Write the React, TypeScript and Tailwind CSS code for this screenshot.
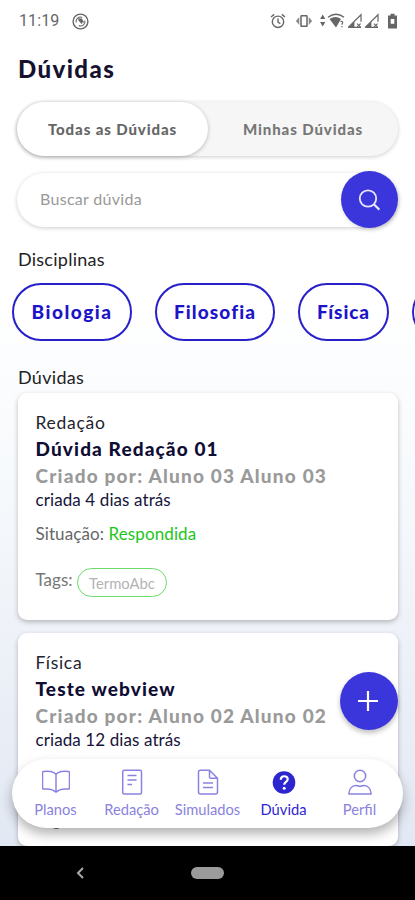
import React from "react";

interface Doubt {
  id: number;
  subject: string;
  title: string;
  author: string;
  created: string;
  status: string;
  tags: string[];
}

const doubts: Doubt[] = [
  {
    id: 1,
    subject: "Redação",
    title: "Dúvida Redação 01",
    author: "Aluno 03 Aluno 03",
    created: "criada 4 dias atrás",
    status: "Respondida",
    tags: ["TermoAbc"],
  },
  {
    id: 2,
    subject: "Física",
    title: "Teste webview",
    author: "Aluno 02 Aluno 02",
    created: "criada 12 dias atrás",
    status: "Respondida",
    tags: [],
  },
];

const StatusBar = () => (
  <header className="flex h-[42px] shrink-0 items-center pl-[19px] pr-[17px] text-[#666]">
    <span className="font-[Roboto,sans-serif] text-[16px] tracking-[0.1px]">11:19</span>
    <svg className="ml-[13px] h-[17px] w-[17px]" viewBox="0 0 17 17" fill="none" stroke="currentColor">
      <circle cx="8.5" cy="8.5" r="7.4" strokeWidth="1.4" />
      <path d="M4.2 9.5a4.300 4.300 0 0 1 6-5M12.8 7.5a4.300 4.300 0 0 1-6 5" strokeWidth="1.1" />
      <path d="M6.300 5.500l3.600.3 2 3.800-1.900-.6-.2 2-3-3.300z" fill="currentColor" strokeWidth="0.4" />
    </svg>
    <div className="ml-auto flex items-center">
      <svg className="h-4 w-4" viewBox="0 0 16 16" fill="none" stroke="currentColor" strokeWidth="1.4">
        <circle cx="8" cy="8.8" r="5.7" />
        <path d="M8 5.5v3.6l2.300 1.600M1 4l3.200-2.600M15 4l-3.200-2.600" />
      </svg>
      <svg className="ml-[9px] h-4 w-[18px]" viewBox="0 0 18 16" fill="currentColor">
        <rect x="6" y="2.700" width="6" height="10.600" rx="0.600" fill="none" stroke="currentColor" strokeWidth="1.500" />
        <path d="M4.300 4v8L.8 8zM13.700 4v8l3.500-4z" opacity="0.75" />
      </svg>
      <svg className="ml-[7px] h-4 w-[25px]" viewBox="0 0 25 16" fill="currentColor">
        <path d="M2.700 1.500l2.600 4.500H.1zM2.700 13.500L.1 9h5.200z" />
        <path d="M8 4.200c5-3.600 11-3.600 16 0" fill="none" stroke="currentColor" strokeWidth="1.400" />
        <path d="M9.500 6c4-2.800 8-2.800 11.500 0L16 14.500z" />
        <path d="M20.500 8.500c2-.8 3 1.200 1.500 2.200v1M22 13v1.300" fill="none" stroke="currentColor" strokeWidth="1.200" />
      </svg>
      {[0, 1].map((i) => (
        <svg key={i} className="ml-[2px] h-4 w-[15px]" viewBox="0 0 15 16">
          <path d="M1.200 14.400L14 1.800v7M14 14.400H1.200z" fill="none" stroke="currentColor" strokeWidth="1.200" />
          <path d="M1.200 14.500l6.200-6v6z" fill="currentColor" />
          <path d="M10 10.600l3.600 3.600M13.600 10.600L10 14.200" stroke="currentColor" strokeWidth="1.100" />
        </svg>
      ))}
      <svg className="ml-[8px] h-4 w-[11px]" viewBox="0 0 11 16">
        <path d="M3.500.8h4v1.600H10v13H1v-13h2.500z" fill="currentColor" />
        <path d="M3.700 6h3.600v4.800H3.700z" fill="#fff" />
      </svg>
    </div>
  </header>
);

const DoubtCard = ({ doubt }: { doubt: Doubt }) => (
  <article className="h-[227px] shrink-0 rounded-[9px] bg-white pl-[18px] pt-[17px] shadow-[0_2px_5px_rgba(0,0,0,0.25)] last:h-[213px]">
    <p className="text-[17.5px] leading-[26px] tracking-[0.7px] text-[#242430]">{doubt.subject}</p>
    <h2 className="text-[19px] font-black leading-[26px] tracking-[1.12px] text-[#100d33]">
      {doubt.title}
    </h2>
    <p className="text-[19px] font-black leading-[27px] tracking-[1.2px] text-[#9a9a9a]">
      Criado por: {doubt.author}
    </p>
    <p className="text-[17px] leading-[22px] tracking-[0.1px] text-[#16143a]">{doubt.created}</p>
    <p className="mt-3 text-[17px] leading-[22px] tracking-[0.1px] text-[#666]">
      Situação: <span className="text-[#1cc51c]">{doubt.status}</span>
    </p>
    <div className="mt-[23px] flex text-[17px] leading-[24px] text-[#777]">
      <span>Tags:</span>
      {doubt.tags.map((tag) => (
        <span
          key={tag}
          className="ml-1 flex h-[29px] items-center rounded-full border-[1.5px] border-[#69dc69] px-[11.5px] text-[14.8px] text-[#b3b3b3]"
        >
          {tag}
        </span>
      ))}
    </div>
  </article>
);

const tabs = [
  {
    label: "Planos",
    icon: (
      <path d="M14 6.200C11.800 3.800 6.500 2.500 1.500 3.500q-1 .2-1 1.200V20q0 1.200 1.200 1.100c4.500-.5 9 .2 10.800 2.100q1.500 1.600 3 0c1.800-1.900 6.300-2.600 10.800-2.100q1.200.1 1.200-1.100V4.700q0-1-1-1.200C21.500 2.500 16.200 3.800 14 6.200zv17" />
    ),
  },
  {
    label: "Redação",
    icon: (
      <>
        <rect x="4.700" y="2.300" width="18.800" height="23.700" rx="1.500" />
        <path d="M9.500 7.500h9M9.500 12h9M9.500 16.500h4.500" />
      </>
    ),
  },
  {
    label: "Simulados",
    icon: (
      <>
        <path d="M15.500 2.300H6.500a2 2 0 0 0-2 2V24a2 2 0 0 0 2 2h15a2 2 0 0 0 2-2V10.300zV9q0 1.300 1.300 1.300h6.700" />
        <path d="M9 15h10M9 19.500h10" />
      </>
    ),
  },
  {
    label: "Dúvida",
    active: true,
    icon: (
      <>
        <circle cx="14" cy="14.500" r="11.300" fill="#2d25d0" stroke="none" />
        <path d="M10.800 11.700c0-4.600 6.900-4.400 6.900-.5 0 2.600-3.500 2.800-3.500 5.600" stroke="#fff" strokeWidth="2.200" />
        <circle cx="14.200" cy="20.200" r="1.500" fill="#fff" stroke="none" />
      </>
    ),
  },
  {
    label: "Perfil",
    icon: (
      <>
        <circle cx="14" cy="8" r="5.700" />
        <path d="M2.800 26c.3-5 3-8.500 7.200-8.500 2.500 0 2.500.8 4 .8s1.500-.8 4-.8c4.200 0 6.900 3.500 7.200 8.500z" />
      </>
    ),
  },
];

const App = () => {
  return (
    <div className="flex h-[900px] w-[415px] flex-col overflow-hidden font-[Lato,sans-serif]">
      <main className="relative flex h-[846px] shrink-0 flex-col overflow-hidden bg-[linear-gradient(180deg,#fff_35%,#f6f9fc_58%,#e2e8f3_100%)]">
        <StatusBar />

        <h1 className="ml-[18px] mt-[11px] text-[24px] font-black leading-8 tracking-[1.4px] text-[#15122f]">
          Dúvidas
        </h1>

        <div className="mx-[17px] mt-[17px] flex h-[54px] shrink-0 rounded-full bg-[#f6f6f6] text-[15px] font-black text-[#666] shadow-[0_1px_4px_rgba(0,0,0,0.2)]">
          <button className="w-[191px] rounded-full bg-white tracking-[0.9px] shadow-[0_1px_4px_rgba(0,0,0,0.25)]">
            Todas as Dúvidas
          </button>
          <button className="flex-1 tracking-[0.9px] text-[#777]">Minhas Dúvidas</button>
        </div>

        <div className="mx-[17px] mt-[15px] flex h-[57px] shrink-0 items-center">
          <div className="-mr-[57px] flex h-[54px] flex-1 items-center rounded-full bg-white pb-0.5 pl-[23px] text-[16px] tracking-[0.3px] text-[#999] shadow-[0_1px_4px_rgba(0,0,0,0.2)]">
            Buscar dúvida
          </div>
          <button className="relative flex h-[57px] w-[57px] items-center justify-center rounded-full bg-[#3b35dc] pr-0.5 shadow-[1px_2px_4px_rgba(0,0,0,0.15)]">
            <svg className="h-6 w-6" viewBox="0 0 24 24" fill="none" stroke="#e6e6ff" strokeWidth="1.800">
              <circle cx="11" cy="10.500" r="8.200" />
              <path d="M16.800 16.300l5.500 5.300" strokeWidth="2.200" />
            </svg>
          </button>
        </div>

        <h2 className="ml-[18px] mt-[19px] text-[18px] leading-6 tracking-[0.25px] text-[#222]">
          Disciplinas
        </h2>
        <div className="ml-3 mt-3 flex shrink-0 gap-[23px] overflow-hidden text-[19px] font-black text-[#1c14c8]">
          <button className="h-[58px] w-[120px] shrink-0 rounded-full border-2 border-[#2820c8] bg-white tracking-[1.5px]">
            Biologia
          </button>
          <button className="h-[58px] w-[120px] shrink-0 rounded-full border-2 border-[#2820c8] bg-white tracking-[1.1px]">
            Filosofia
          </button>
          <button className="h-[58px] w-[91px] shrink-0 rounded-full border-2 border-[#2820c8] bg-white tracking-[0.9px]">
            Física
          </button>
          <button className="h-[58px] w-[120px] shrink-0 rounded-full border-2 border-[#2820c8] bg-white" />
        </div>

        <h2 className="ml-[18px] mt-6 text-[18px] leading-6 tracking-[0.3px] text-[#222]">Dúvidas</h2>
        <section className="mx-[17.5px] mt-1 flex flex-col gap-[13px]">
          {doubts.map((doubt) => (
            <DoubtCard key={doubt.id} doubt={doubt} />
          ))}
        </section>

        <button className="absolute left-[340px] top-[672px] flex h-[58px] w-[58px] items-center justify-center rounded-full bg-[#3b35dc] pr-0.5 shadow-[0_3px_5px_rgba(0,0,0,0.25)]">
          <svg className="h-5 w-5" viewBox="0 0 20 20" stroke="#fff" strokeWidth="2.200">
            <path d="M10 0v20M0 10h20" />
          </svg>
        </button>

        <nav className="absolute left-3 top-[759px] flex h-[69px] w-[391px] justify-center rounded-full bg-white shadow-[0_6px_12px_rgba(0,0,0,0.3)]">
          {tabs.map((tab) => (
            <a
              key={tab.label}
              className={`flex w-[76px] flex-col items-center pt-[9px] ${
                tab.active ? "text-[#2d25d0]" : "text-[#8a82e0]"
              }`}
            >
              <svg
                className="h-7 w-7"
                viewBox="0 0 28 28"
                fill="none"
                stroke="currentColor"
                strokeWidth="1.500"
                strokeLinejoin="round"
              >
                {tab.icon}
              </svg>
              <span className="mt-1 text-[14.7px] leading-[18px]">{tab.label}</span>
            </a>
          ))}
        </nav>
      </main>

      <footer className="flex h-[54px] shrink-0 items-center bg-black">
        <svg className="ml-[76px] h-3 w-2" viewBox="0 0 8 12" fill="none" stroke="#aaa" strokeWidth="2">
          <path d="M7 1L2 6l5 5" />
        </svg>
        <span className="ml-[107px] h-3 w-[33px] rounded-full bg-[#9b9b9b]" />
      </footer>
    </div>
  );
};

export default App;
